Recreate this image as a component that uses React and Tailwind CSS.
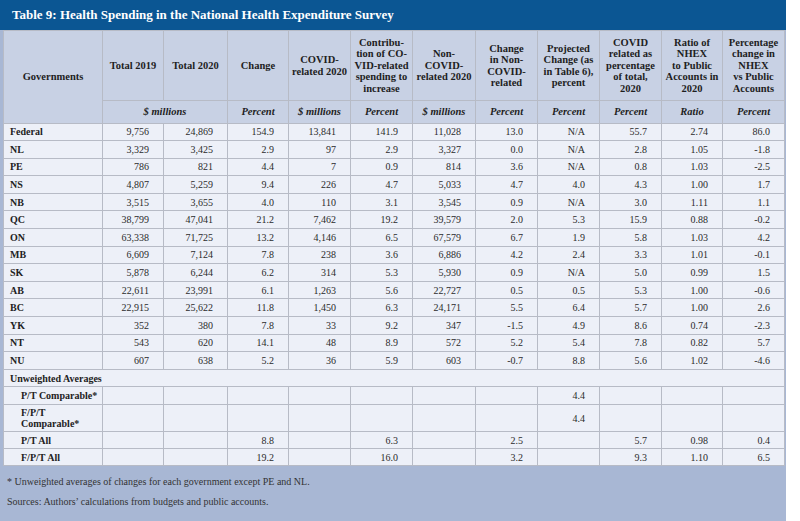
import React from "react";

const cols = [99, 61, 64, 61, 62, 62, 63, 62, 62, 62, 61, 62];

const headers = [
  "Total 2019",
  "Total 2020",
  "Change",
  "COVID-\nrelated 2020",
  "Contribu-\ntion of CO-\nVID-related\nspending to\nincrease",
  "Non-\nCOVID-\nrelated 2020",
  "Change\nin Non-\nCOVID-\nrelated",
  "Projected\nChange (as\nin Table 6),\npercent",
  "COVID\nrelated as\npercentage\nof total,\n2020",
  "Ratio of\nNHEX\nto Public\nAccounts in\n2020",
  "Percentage\nchange in\nNHEX\nvs Public\nAccounts",
];

const units = [
  { label: "$ millions", span: 2 },
  { label: "Percent" },
  { label: "$ millions" },
  { label: "Percent" },
  { label: "$ millions" },
  { label: "Percent" },
  { label: "Percent" },
  { label: "Percent" },
  { label: "Ratio" },
  { label: "Percent" },
];

const rows = [
  ["Federal", "9,756", "24,869", "154.9", "13,841", "141.9", "11,028", "13.0", "N/A", "55.7", "2.74", "86.0"],
  ["NL", "3,329", "3,425", "2.9", "97", "2.9", "3,327", "0.0", "N/A", "2.8", "1.05", "-1.8"],
  ["PE", "786", "821", "4.4", "7", "0.9", "814", "3.6", "N/A", "0.8", "1.03", "-2.5"],
  ["NS", "4,807", "5,259", "9.4", "226", "4.7", "5,033", "4.7", "4.0", "4.3", "1.00", "1.7"],
  ["NB", "3,515", "3,655", "4.0", "110", "3.1", "3,545", "0.9", "N/A", "3.0", "1.11", "1.1"],
  ["QC", "38,799", "47,041", "21.2", "7,462", "19.2", "39,579", "2.0", "5.3", "15.9", "0.88", "-0.2"],
  ["ON", "63,338", "71,725", "13.2", "4,146", "6.5", "67,579", "6.7", "1.9", "5.8", "1.03", "4.2"],
  ["MB", "6,609", "7,124", "7.8", "238", "3.6", "6,886", "4.2", "2.4", "3.3", "1.01", "-0.1"],
  ["SK", "5,878", "6,244", "6.2", "314", "5.3", "5,930", "0.9", "N/A", "5.0", "0.99", "1.5"],
  ["AB", "22,611", "23,991", "6.1", "1,263", "5.6", "22,727", "0.5", "0.5", "5.3", "1.00", "-0.6"],
  ["BC", "22,915", "25,622", "11.8", "1,450", "6.3", "24,171", "5.5", "6.4", "5.7", "1.00", "2.6"],
  ["YK", "352", "380", "7.8", "33", "9.2", "347", "-1.5", "4.9", "8.6", "0.74", "-2.3"],
  ["NT", "543", "620", "14.1", "48", "8.9", "572", "5.2", "5.4", "7.8", "0.82", "5.7"],
  ["NU", "607", "638", "5.2", "36", "5.9", "603", "-0.7", "8.8", "5.6", "1.02", "-4.6"],
];

const averages = [
  { label: "P/T Comparable*", h: "h-[17.6px]", vals: ["", "", "", "", "", "", "", "4.4", "", "", ""] },
  { label: "F/P/T\nComparable*", h: "h-[27px]", vals: ["", "", "", "", "", "", "", "4.4", "", "", ""] },
  { label: "P/T All", h: "h-[17px]", vals: ["", "", "8.8", "", "6.3", "", "2.5", "", "5.7", "0.98", "0.4"] },
  { label: "F/P/T All", h: "h-[17px]", vals: ["", "", "19.2", "", "16.0", "", "3.2", "", "9.3", "1.10", "6.5"] },
];

const cell = "border border-[#b7bbc6] p-0";

export default function App() {
  return (
    <div className="w-[800px] h-[521px] bg-white font-['Liberation_Serif',serif]">
      <div className="w-[786px] h-[521px] bg-[#a8b7d4] flex flex-col">
        <div className="h-[30px] bg-[#0b5693] flex items-center pl-[12px] text-white font-bold text-[13px]">
          Table 9: Health Spending in the National Health Expenditure Survey
        </div>
        <div className="px-[3px]">
          <table className="table-fixed border-collapse w-[781px] text-[#2b2b2b]">
            <colgroup>
              {cols.map((w, i) => (
                <col key={i} style={{ width: w }} />
              ))}
            </colgroup>
            <thead>
              <tr className="bg-[#c8d1e4] h-[70px]">
                <th rowSpan={2} className={`${cell} text-[10.5px] font-bold text-[#1e1e1e] align-middle`}>
                  Governments
                </th>
                {headers.map((h, i) => (
                  <th
                    key={i}
                    className={`${cell} text-[10.5px] leading-[11.5px] font-bold text-[#1e1e1e] whitespace-pre-line align-middle`}
                  >
                    {h}
                  </th>
                ))}
              </tr>
              <tr className="bg-[#c8d1e4] h-[22.5px]">
                {units.map((u, i) => (
                  <th
                    key={i}
                    colSpan={u.span || 1}
                    className={`${cell} text-[10.5px] font-bold italic text-[#1e1e1e]`}
                  >
                    {u.label}
                  </th>
                ))}
              </tr>
            </thead>
            <tbody className="bg-[#edf0f8] text-[10px]">
              {rows.map((r) => (
                <tr key={r[0]} className="h-[17.6px]">
                  <td className={`${cell} pl-[6px] font-bold text-[#222]`}>{r[0]}</td>
                  {r.slice(1).map((v, i) => (
                    <td key={i} className={`${cell} text-right pr-[14px]`}>
                      {v}
                    </td>
                  ))}
                </tr>
              ))}
              <tr className="h-[17.6px]">
                <td colSpan={12} className={`${cell} pl-[6px] font-bold text-[#222]`}>
                  Unweighted Averages
                </td>
              </tr>
              {averages.map((a) => (
                <tr key={a.label} className={a.h}>
                  <td className={`${cell} pl-[17px] font-bold text-[#222] whitespace-pre-line leading-[11px]`}>
                    {a.label}
                  </td>
                  {a.vals.map((v, i) => (
                    <td key={i} className={`${cell} text-right pr-[14px]`}>
                      {v}
                    </td>
                  ))}
                </tr>
              ))}
            </tbody>
          </table>
        </div>
        <div className="pt-[6px] pl-[7px] text-[10px] leading-[20px] text-[#333]">
          <p>* Unweighted averages of changes for each government except PE and NL.</p>
          <p>Sources: Authors’ calculations from budgets and public accounts.</p>
        </div>
      </div>
    </div>
  );
}
